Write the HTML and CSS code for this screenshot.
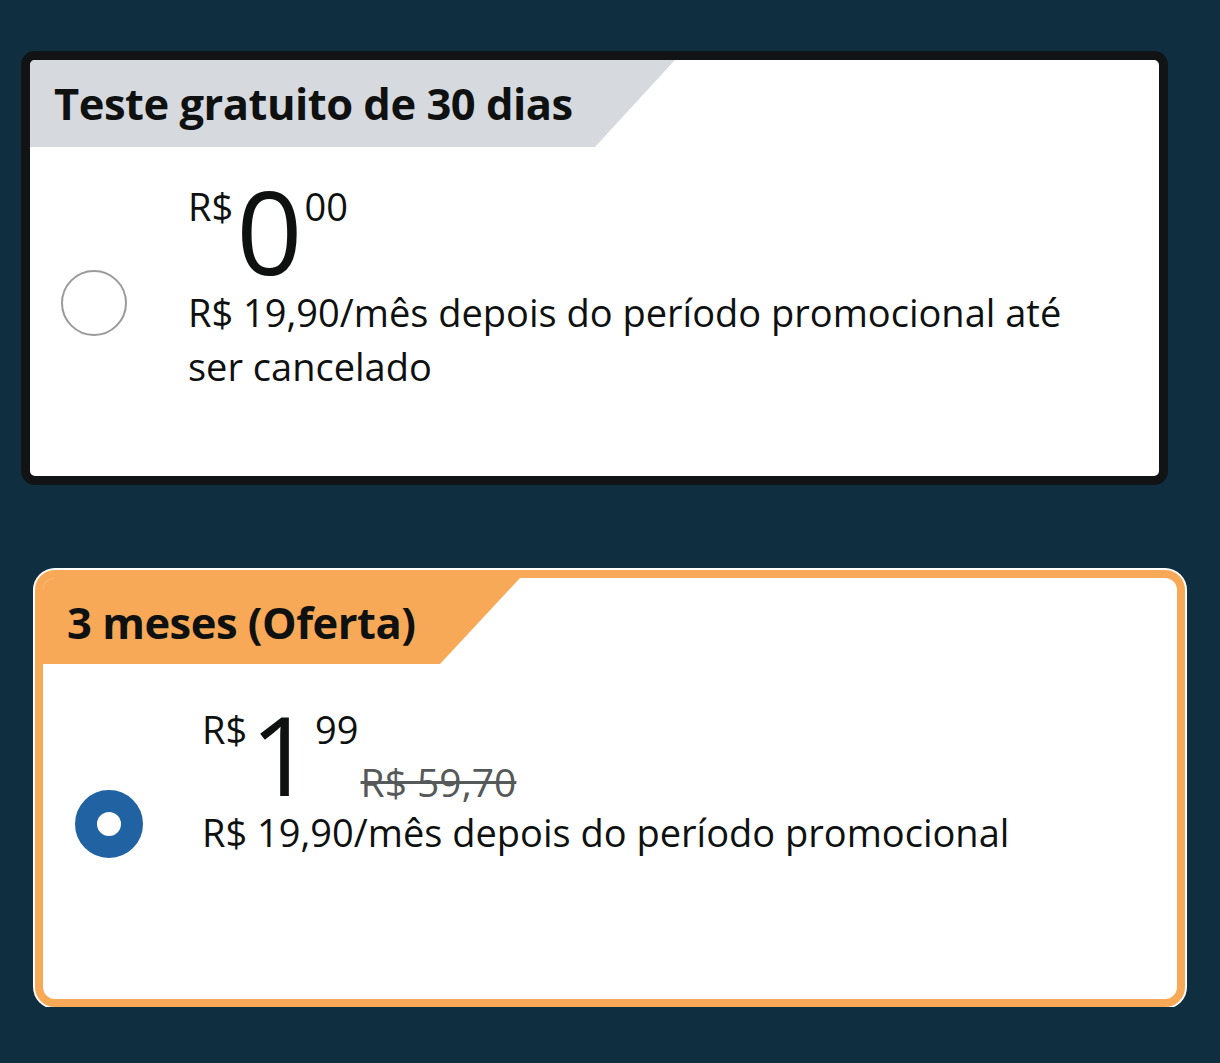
FILE: index.html
```html
<!DOCTYPE html>
<html lang="pt-BR">
<head>
    <meta charset="utf-8">
    <meta name="viewport" content="width=device-width, initial-scale=1.0">
    <title>Planos</title>
    <link rel="stylesheet" href="styles.css">
</head>
<body>

<div class="plans">

    <div class="plan plan-trial">
        <div class="plan-tab"><span class="plan-title">Teste gratuito de 30 dias</span></div>
        <div class="plan-body">
            <span class="radio"></span>
            <div class="plan-info">
                <div class="price">
                    <span class="price-symbol">R$</span><span class="price-whole">0</span><span class="price-fraction">00</span>
                </div>
                <div class="plan-terms">R$ 19,90/mês depois do período promocional até ser cancelado</div>
            </div>
        </div>
    </div>

    <div class="plan plan-offer">
        <div class="plan-tab"><span class="plan-title">3 meses (Oferta)</span></div>
        <div class="plan-body">
            <span class="radio radio-checked"></span>
            <div class="plan-info">
                <div class="price">
                    <span class="price-symbol">R$</span><span class="price-whole">1</span><span class="price-fraction">99</span><span class="price-old">R$ 59,70</span>
                </div>
                <div class="plan-terms">R$ 19,90/mês depois do período promocional</div>
            </div>
        </div>
    </div>

</div>

</body>
</html>
```

FILE: styles.css
```css
html, body {
    margin: 0;
    padding: 0;
    background-color: #0f2f40;
    font-family: "Open Sans", "Noto Sans", sans-serif;
    color: #0f1111;
}

.plans {
    padding: 51px 0 0 21px;
}

.plan {
    box-sizing: border-box;
    background-color: #fff;
    overflow: hidden;
}

.plan-trial {
    width: 1147px;
    height: 434px;
    border: 9px solid #111314;
    border-radius: 14px;
}

.plan-offer {
    width: 1150px;
    height: 437px;
    margin: 85px 0 0 14px;
    border: 8px solid #f8a957;
    border-radius: 20px;
    box-shadow: 0 0 0 2px #fff;
}

.plan-tab {
    display: flex;
    align-items: center;
    height: 87px;
    padding-left: 24px;
    background-color: #d6dadf;
    clip-path: polygon(0 0, 100% 0, calc(100% - 80px) 100%, 0 100%);
}

.plan-trial .plan-tab {
    width: 621px;
}

.plan-offer .plan-tab {
    width: 477px;
    height: 86px;
    padding-top: 2px;
    box-sizing: border-box;
    background-color: #f8a957;
}

.plan-title {
    font-size: 43.5px;
    font-weight: 700;
    letter-spacing: -0.5px;
}

.plan-body {
    display: flex;
    align-items: center;
    padding: 40px 40px 0 31px;
}

.plan-offer .plan-body {
    padding-top: 46px;
    padding-left: 0;
}

.radio {
    box-sizing: border-box;
    flex: none;
    width: 66px;
    height: 66px;
    margin-right: 61px;
    border: 2px solid #9a9a9a;
    border-radius: 50%;
    background-color: #fff;
}

.plan-trial .radio {
    margin-top: 26px;
}

.plan-offer .radio {
    margin: 80px 59px 0 32px;
    width: 68px;
    height: 68px;
    border: 22px solid #2062a2;
}

.price {
    display: flex;
    align-items: flex-start;
    line-height: 1;
}

.price-symbol,
.price-fraction {
    font-size: 38px;
    line-height: 1;
}

.price-whole {
    font-size: 116px;
    line-height: 0.86;
    margin: -6px 2px 0 3px;
}

.plan-offer .price-whole {
    font-size: 110px;
    margin-top: -4px;
}

.price-old {
    align-self: flex-end;
    margin-left: 2px;
    font-size: 39px;
    color: #565959;
    text-decoration: line-through;
}

.plan-terms {
    max-width: 900px;
    margin-top: 4px;
    font-size: 38px;
    line-height: 54px;
}
```
